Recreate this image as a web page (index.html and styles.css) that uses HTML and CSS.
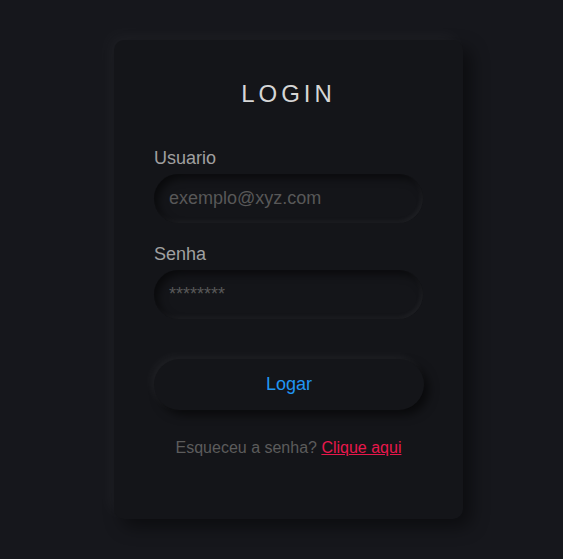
FILE: index.html
```html
<!DOCTYPE html>
<html lang="pt">
<head>
<meta charset="utf-8">
<title>Login</title>
<link rel="stylesheet" href="styles.css">
</head>
<body>
  <main class="page">
    <form class="card">
      <h1 class="title">LOGIN</h1>
      <label class="label" for="user">Usuario</label>
      <input class="field" id="user" type="text" placeholder="exemplo@xyz.com">
      <label class="label label-second" for="pass">Senha</label>
      <input class="field" id="pass" type="password" placeholder="********">
      <button class="btn" type="button">Logar</button>
      <p class="footer">Esqueceu a senha? <a class="link" href="#">Clique aqui</a></p>
    </form>
  </main>
</body>
</html>
```

FILE: styles.css
```css
* { box-sizing: border-box; }
html, body {
  margin: 0;
  padding: 0;
  background: #16171c;
  font-family: "Liberation Sans", Arial, sans-serif;
}
.page {
  padding: 40px 0 0 114px;
  height: 559px;
  overflow: hidden;
}
.card {
  width: 349px;
  height: 479px;
  background: #141519;
  border-radius: 10px;
  padding: 40px 40px 0 40px;
  display: flex;
  flex-direction: column;
  box-shadow: -6px -6px 16px rgba(255,255,255,0.035), 8px 8px 18px rgba(0,0,0,0.45);
}
.title {
  margin: 0 0 40px 0;
  font-size: 24px;
  line-height: 28px;
  font-weight: normal;
  letter-spacing: 4px;
  text-align: center;
  color: #d6d6d6;
}
.label {
  display: block;
  font-size: 18px;
  line-height: 20px;
  color: #a0a0a0;
  margin: 0 0 6px 0;
}
.label-second { margin-top: 21px; }
.field {
  width: 269px;
  height: 49px;
  border: none;
  outline: none;
  border-radius: 25px;
  background: #141519;
  padding: 0 15px;
  font-family: "Liberation Sans", Arial, sans-serif;
  font-size: 18px;
  color: #bbb;
  box-shadow: inset 4px 4px 8px rgba(0,0,0,0.55), inset -2px -2px 5px rgba(255,255,255,0.05);
}
.field::placeholder { color: #585858; }
.btn {
  margin-top: 40px;
  width: 270px;
  height: 51px;
  border: none;
  border-radius: 26px;
  background: #141519;
  color: #2196f3;
  font-family: "Liberation Sans", Arial, sans-serif;
  font-size: 18px;
  cursor: pointer;
  box-shadow: -3px -3px 8px rgba(255,255,255,0.05), 5px 5px 10px rgba(0,0,0,0.55);
}
.footer {
  margin: 28px 0 0 0;
  font-size: 16px;
  line-height: 20px;
  text-align: center;
  color: #5c5c5c;
}
.link { color: #e8184c; }
```
